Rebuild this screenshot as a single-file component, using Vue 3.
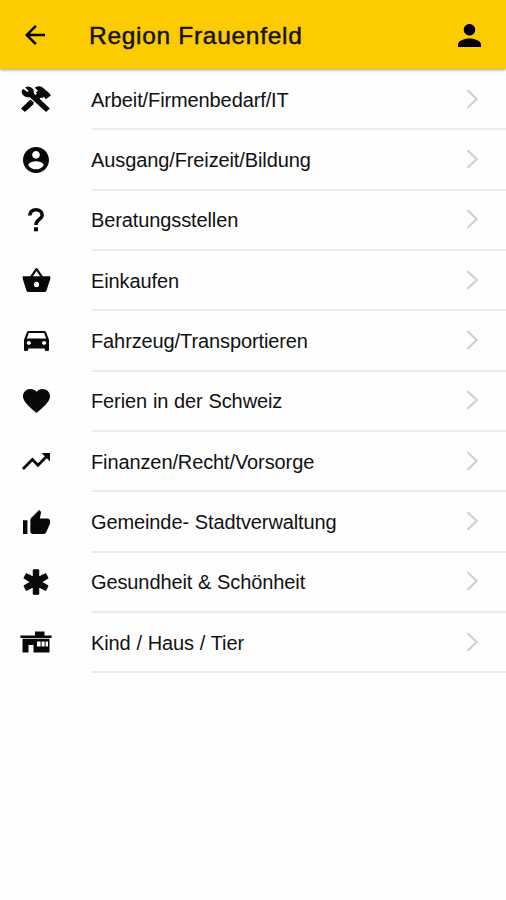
<template>
    <div class="page">
        <header class="toolbar">
            <button class="back" aria-label="Zurück">
                <svg width="20" height="20" viewBox="4 4 16 16">
                    <path d="M20 11H7.83l5.59-5.59L12 4l-8 8 8 8 1.41-1.41L7.83 13H20v-2z" />
                </svg>
            </button>
            <h1 class="title">Region Frauenfeld</h1>
            <button class="profile" aria-label="Profil">
                <svg width="23" height="23" viewBox="4 4 16 16">
                    <path
                        d="M12 12c2.21 0 4-1.79 4-4s-1.79-4-4-4-4 1.79-4 4 1.79 4 4 4zm0 2c-2.67 0-8 1.34-8 4v2h16v-2c0-2.66-5.33-4-8-4z" />
                </svg>
            </button>
        </header>
        <ul class="list">
            <li v-for="item in categories" :key="item.label" class="row">
                <span class="icon">
                    <svg :width="item.width" :height="item.height" :viewBox="item.viewBox" preserveAspectRatio="none">
                        <path :d="item.path" :class="item.style" fill-rule="evenodd" />
                        <path v-if="item.extra" :d="item.extra" />
                    </svg>
                </span>
                <div class="content">
                    <span class="label">{{ item.label }}</span>
                    <svg class="chevron" width="13" height="22" viewBox="0 0 13 22">
                        <path d="M1.5 1.2L10.7 10L1.5 18.8" />
                    </svg>
                </div>
            </li>
        </ul>
    </div>
</template>

<script setup>
const categories = [
    {
        label: 'Arbeit/Firmenbedarf/IT',
        width: 30,
        height: 26,
        viewBox: '1.5 2.1 21 19.8',
        style: 'heavy',
        path: 'M10.22 15.3L4.22 21.1L2.31 19.14L8.11 13.14L10.22 15.3M6.5 10.1C6.89 10.1 7.31 10.05 7.64 9.91L19.03 21.05L20.94 19.14L13.73 11.74L15.5 9.96L16.22 10.66L17.67 9.25L18.9 11.4L21.69 9.25L20.6 7.6L16.22 3.58C15.05 2.71 13.17 2.71 12 3.58L14.11 5.74L12.7 7.14L13.41 7.85L11.62 9.63L9.8 7.75C9.94 7.42 10 7 10 6.63C10 4.66 8.44 3.11 6.5 3.11C5.91 3.11 5.6 3.11 5.3 3.33L7.59 5.9L6.09 7.5L3.1 5.03C2.6 5.5 2.5 6 2.5 6.63C2.5 8.55 4.55 10.1 6.5 10.1Z'
    },
    {
        label: 'Ausgang/Freizeit/Bildung',
        width: 26,
        height: 26,
        viewBox: '2 2 20 20',
        path: 'M12 2C6.48 2 2 6.48 2 12s4.48 10 10 10 10-4.48 10-10S17.52 2 12 2zm0 3c1.66 0 3 1.34 3 3s-1.34 3-3 3-3-1.34-3-3 1.34-3 3-3zm0 14.2c-2.5 0-4.71-1.28-6-3.22.03-1.99 4-3.08 6-3.08 1.99 0 5.97 1.09 6 3.08-1.29 1.94-3.5 3.22-6 3.22z'
    },
    {
        label: 'Beratungsstellen',
        width: 16,
        height: 24,
        viewBox: '0 0 16 24',
        style: 'stroked',
        path: 'M1.8 7.4C1.8 4 4.3 1.8 8 1.8C11.7 1.8 14.2 4 14.2 7.2C14.2 11.2 8 11.4 8 17',
        extra: 'M6 19.3h4v4H6z'
    },
    {
        label: 'Einkaufen',
        width: 29,
        height: 24,
        viewBox: '0 2 24 19',
        path: 'M17.21 8.6l-4.38-6.16c-.19-.28-.51-.42-.83-.42-.32 0-.64.14-.83.43L6.79 8.6H.6V10.6L3.54 19.54c.23.84 1 1.46 1.92 1.46h13c.92 0 1.69-.62 1.93-1.46L23.4 10.6V8.6ZM9 8.6l3-4.2L15 8.6H9zm3 8.7c-1.2 0-2.2-1-2.2-2.2s1-2.2 2.2-2.2 2.2 1 2.2 2.2-1 2.2-2.2 2.2z'
    },
    {
        label: 'Fahrzeug/Transportieren',
        width: 25,
        height: 20,
        viewBox: '3 5 18 16',
        path: 'M18.92 6.01C18.72 5.42 18.16 5 17.5 5h-11c-.66 0-1.21.42-1.42 1.01L3 12v8c0 .55.45 1 1 1h1c.55 0 1-.45 1-1v-1h12v1c0 .55.45 1 1 1h1c.55 0 1-.45 1-1v-8l-2.08-5.99zM6.5 16c-.83 0-1.5-.67-1.5-1.5S5.67 13 6.5 13s1.5.67 1.5 1.5S7.33 16 6.5 16zm11 0c-.83 0-1.5-.67-1.5-1.5s.67-1.5 1.5-1.5 1.5.67 1.5 1.5-.67 1.5-1.5 1.5zM5 11l1.5-4.5h11L19 11H5z'
    },
    {
        label: 'Ferien in der Schweiz',
        width: 27,
        height: 24,
        viewBox: '2 3 20 18.35',
        path: 'M12 21.35l-1.45-1.32C5.4 15.36 2 12.28 2 8.5 2 5.42 4.42 3 7.5 3c1.74 0 3.41.81 4.5 2.09C13.09 3.81 14.76 3 16.5 3 19.58 3 22 5.42 22 8.5c0 3.78-3.4 6.86-8.55 11.54L12 21.35z'
    },
    {
        label: 'Finanzen/Recht/Vorsorge',
        width: 28,
        height: 17,
        viewBox: '2 6 20 12',
        path: 'M16 6l2.29 2.29-4.88 4.88-4-4L2 16.59 3.41 18l6-6 4 4 6.3-6.29L22 12V6z'
    },
    {
        label: 'Gemeinde- Stadtverwaltung',
        width: 27,
        height: 24,
        viewBox: '1 1 22 20',
        path: 'M1 21h3.6V9.5H1V21zm22-11c0-1.1-.9-2-2-2h-6.31l.95-4.57.03-.32c0-.41-.17-.79-.44-1.06L14.17 1 7.59 7.59C7.22 7.95 7 8.45 7 9v10c0 1.1.9 2 2 2h9c.83 0 1.54-.5 1.84-1.22l3.02-7.05c.09-.23.14-.47.14-.73v-2z'
    },
    {
        label: 'Gesundheit & Schönheit',
        width: 26,
        height: 26,
        viewBox: '0 0 26 26',
        style: 'heavy',
        path: 'M10.8 .8H15.2Q15.7 .8 15.7 1.2V8.3L22 4.9Q22.5 4.6 22.8 5.1L24.8 8.7Q25 9.1 24.6 9.4L18.4 13L24.6 16.6Q25 16.9 24.8 17.3L22.8 20.9Q22.5 21.4 22 21.1L15.7 17.7V24.8Q15.7 25.2 15.2 25.2H10.8Q10.3 25.2 10.3 24.8V17.7L4 21.1Q3.5 21.4 3.2 20.9L1.2 17.3Q1 16.9 1.4 16.6L7.6 13L1.4 9.4Q1 9.1 1.2 8.7L3.2 5.1Q3.5 4.6 4 4.9L10.3 8.3V1.2Q10.3 .8 10.8 .8Z'
    },
    {
        label: 'Kind / Haus / Tier',
        width: 32,
        height: 22,
        viewBox: '0 0 32 22',
        path: 'M15 .5H24.5V4.5H31.6V7H.4V4.5H15ZM2.5 7.8H29.5V21.5H13.5V14H8.5V21.5H2.5ZM17 10.5V15.5H20.6V10.5ZM21.6 10.5V15.5H24.6V10.5ZM25.6 10.5V15.5H28V10.5Z'
    }
]
</script>

<style>
body {
    background: #fefefe;
}
</style>

<style scoped>
.page {
    min-height: 900px;
    font-family: "Liberation Sans", Arial, sans-serif;
    color: #111;
}

.toolbar {
    position: relative;
    display: flex;
    align-items: center;
    box-sizing: border-box;
    height: 69px;
    padding: 1px 25px 0;
    background: #fdcc00;
    box-shadow: 0 1px 3px rgba(0, 0, 0, 0.4);
}

.back,
.profile {
    display: flex;
    padding: 0;
    border: 0;
    background: none;
}

.title {
    flex: 1;
    margin: 2px 0 0 44px;
    font-size: 24.5px;
    font-weight: normal;
    line-height: 30px;
    letter-spacing: 0.7px;
    -webkit-text-stroke: 0.5px #17130a;
    color: #17130a;
}

.list {
    margin: 0;
    padding: 0;
    list-style: none;
}

.row {
    display: flex;
    height: 60.35px;
}

.icon {
    display: flex;
    align-items: center;
    justify-content: center;
    width: 72px;
    margin-right: 20px;
}

.icon svg {
    fill: #080808;
}

.icon .stroked {
    fill: none;
    stroke: #080808;
    stroke-width: 3.6;
}

.icon .heavy {
    stroke: #080808;
    stroke-width: 1.1;
}

.content {
    display: flex;
    flex: 1;
    align-items: center;
    justify-content: space-between;
    box-sizing: border-box;
    height: 61.35px;
    padding: 2px 27px 0 0;
    border-bottom: 2px solid #ebebeb;
}

.label {
    margin-left: -1px;
    font-size: 20px;
    line-height: 24px;
    letter-spacing: -0.11px;
    word-spacing: 0.4px;
    white-space: pre;
}

.chevron {
    fill: none;
    stroke: #d0d0d0;
    stroke-width: 2.2;
}
</style>
